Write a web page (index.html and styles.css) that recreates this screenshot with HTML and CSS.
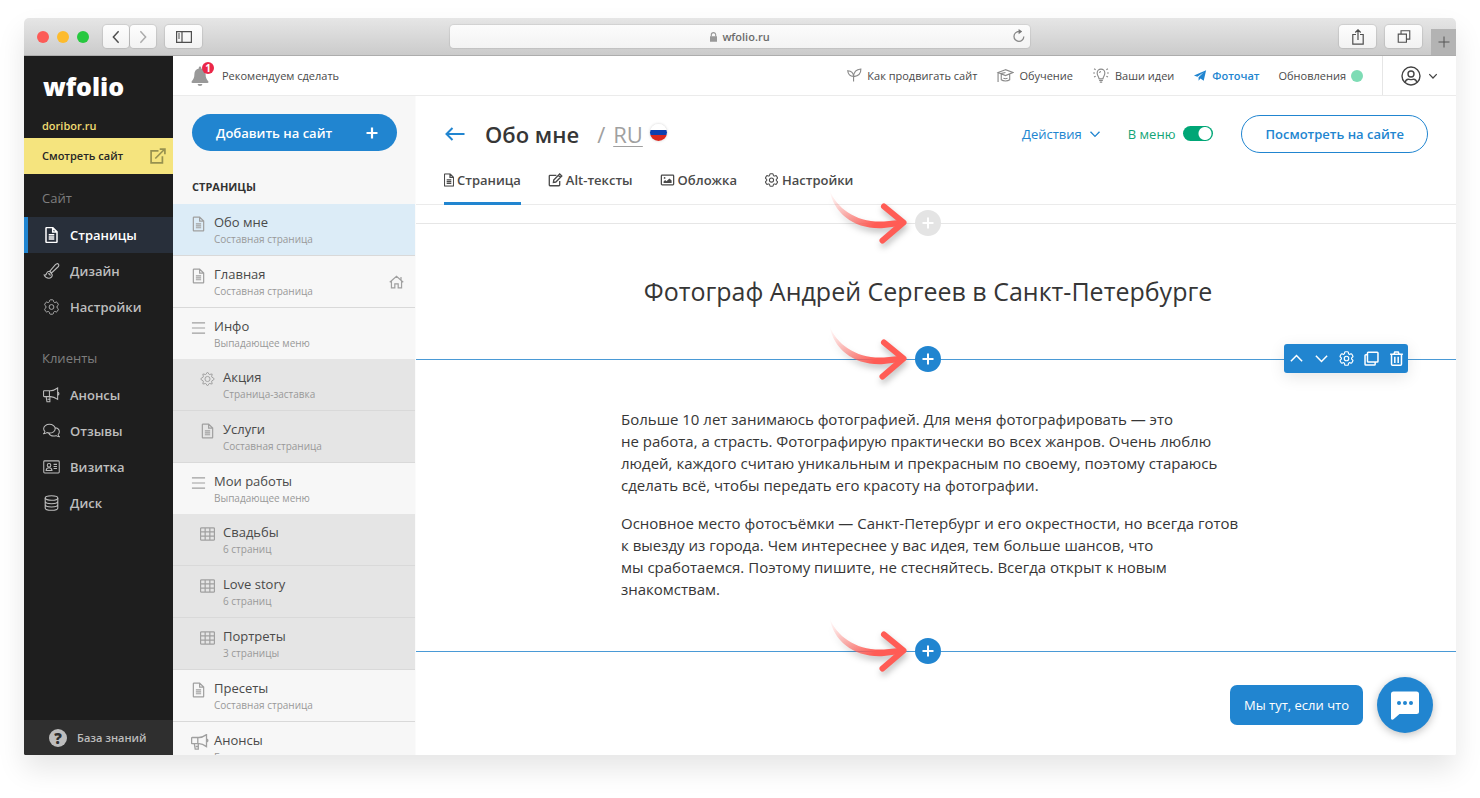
FILE: index.html
```html
<!DOCTYPE html>
<html lang="ru">
<head>
<meta charset="utf-8">
<title>wfolio.ru</title>
<link rel="stylesheet" href="styles.css">
</head>
<body>
<svg class="sprite" aria-hidden="true">
  <symbol id="doc" viewBox="0 0 16 16"><path d="M2.5 1.2A.7.7 0 0 1 3.2.6h6l4.3 4.3v9.8a.7.7 0 0 1-.7.7H3.2a.7.7 0 0 1-.7-.7zM9.2.8v4.1h4.1M5.2 7.8h5.6M5.2 9.9h5.6M5.2 12h5.6"/></symbol>
  <symbol id="gear" viewBox="2 2 20 20"><path d="M9.594 3.94c.09-.542.56-.94 1.11-.94h2.593c.55 0 1.02.398 1.11.94l.213 1.281c.063.374.313.686.645.87.074.04.147.083.22.127.325.196.72.257 1.075.124l1.217-.456a1.125 1.125 0 0 1 1.37.49l1.296 2.247a1.125 1.125 0 0 1-.26 1.431l-1.003.827c-.293.241-.438.613-.43.992a7.723 7.723 0 0 1 0 .255c-.008.378.137.75.43.991l1.004.827c.424.35.534.955.26 1.43l-1.298 2.247a1.125 1.125 0 0 1-1.369.491l-1.217-.456c-.355-.133-.75-.072-1.076.124a6.47 6.47 0 0 1-.22.128c-.331.183-.581.495-.644.869l-.213 1.281c-.09.543-.56.94-1.11.94h-2.594c-.55 0-1.019-.398-1.11-.94l-.213-1.281c-.062-.374-.312-.686-.644-.87a6.52 6.52 0 0 1-.22-.127c-.325-.196-.72-.257-1.076-.124l-1.217.456a1.125 1.125 0 0 1-1.369-.49l-1.297-2.247a1.125 1.125 0 0 1 .26-1.431l1.004-.827c.292-.24.437-.613.43-.991a6.932 6.932 0 0 1 0-.255c.007-.38-.138-.751-.43-.992l-1.004-.827a1.125 1.125 0 0 1-.26-1.43l1.297-2.247a1.125 1.125 0 0 1 1.37-.491l1.216.456c.356.133.751.072 1.076-.124.072-.044.146-.086.22-.128.332-.183.582-.495.644-.869zM15 12a3 3 0 1 1-6 0 3 3 0 0 1 6 0z"/></symbol>
  <symbol id="cog8" viewBox="2 2 20 20"><path d="M12 2.8l2.300 3.200 3.900-.7-.7 3.900 3.300 2.300v1l-3.300 2.300.7 3.900-3.900-.7-2.300 3.200-2.300-3.200-3.900.7.7-3.900-3.300-2.300v-1l3.300-2.300-.7-3.900 3.900.7z"/><circle cx="12" cy="12" r="3.400"/></symbol>
  <symbol id="brush" viewBox="0 0 16 16"><path d="M14.900 1.100c-.9-.9-2.200-.3-3 .5L6.300 8.200l1.700 1.700L14.400 4c.8-.8 1.300-2.100.5-2.900zM6.300 8.300c-1.500-.1-2.900.6-3.200 2.100-.2 1.200-1 1.800-2.400 1.700.9 2.200 3 3.200 5 3.100 2.100-.1 3.400-2 2.900-3.800zM4.700 10.600c1.300-.1 1.800.8 2.200 2"/></symbol>
  <symbol id="horn" viewBox="0 0 18 16"><path d="M1.200 3.500H8c2.700 0 5.500-1.500 7.500-2.900v12c-2-1.400-4.800-2.900-7.500-2.900H1.200A.6.600 0 0 1 .6 9.100V4.100a.6.600 0 0 1 .6-.6zM6.800 3.500v6.200M15.500 5.200a1.400 1.400 0 0 1 0 2.800M3.300 9.700l.9 5.500h3.100V9.900M4.800 12.500h2.500"/></symbol>
  <symbol id="chats" viewBox="0 0 18 16"><path d="M6.800.9C3.400.9.700 3 .700 5.600c0 1.100.5 2.100 1.300 2.900-.1.900-.6 1.700-1.300 2.300 1.400 0 2.600-.4 3.500-1.100.8.3 1.700.5 2.600.5 3.400 0 6.100-2.100 6.100-4.600S10.200.9 6.800.9zM13.200 4.600c2.400.5 4.100 2.200 4.100 4.200 0 1.100-.5 2.100-1.300 2.900.1.900.6 1.700 1.300 2.300-1.400 0-2.600-.4-3.500-1.100-3 .9-6.300 0-7.700-2.600"/></symbol>
  <symbol id="card" viewBox="0 0 18 16"><rect x=".8" y="1.500" width="16.400" height="12.800" rx="1"/><circle cx="6.400" cy="6.200" r="1.900"/><path d="M3.300 11.600c.2-2 1.300-2.900 3.100-2.900s2.900.9 3.100 2.900zM11.200 5.200h3.600M11.200 7.400h3.600M11.200 9.600h3.600"/></symbol>
  <symbol id="disk" viewBox="0 0 16 16"><ellipse cx="8" cy="3" rx="6.300" ry="2.300"/><path d="M1.700 3v9.900c0 1.300 2.800 2.400 6.300 2.400s6.300-1.100 6.300-2.400V3M1.700 6.300c0 1.300 2.800 2.400 6.300 2.400s6.300-1.100 6.300-2.400M1.700 9.600c0 1.300 2.800 2.400 6.300 2.400s6.300-1.100 6.300-2.400"/></symbol>
  <symbol id="bars" viewBox="0 0 16 16"><path d="M1 2.500h14M1 8h14M1 13.500h14"/></symbol>
  <symbol id="table" viewBox="0 0 16 16"><rect x=".6" y="1.500" width="14.800" height="13" rx="1"/><path d="M.6 5.800h14.800M.6 10.200h14.800M5.500 1.500v13M10.500 1.500v13"/></symbol>
  <symbol id="home" viewBox="0 0 16 16"><path d="M.8 8.300 8 1.900l7.200 6.400M2.600 6.900v7.400h3.600V9.900h3.600v4.400h3.600V6.900M12.800 5.800V2.700"/></symbol>
  <symbol id="down" viewBox="0 0 16 16"><path d="M2 5l6 6.200L14 5"/></symbol>
  <symbol id="up" viewBox="0 0 16 16"><path d="M2 11l6-6.200 6 6.200"/></symbol>
  <symbol id="plus" viewBox="0 0 12 12"><path d="M6 .5v11M.5 6h11"/></symbol>
  <symbol id="external" viewBox="0 0 16 16"><path d="M8.500 2.900H1.100v12h11.300V8.200M5.300 10.500l9-9M9.700 1.100h5.200v5.200"/></symbol>
  <symbol id="bell" viewBox="0 0 18 20"><path d="M9 .5a1.200 1.200 0 0 0-1.200 1.300v.6C4.900 3 3.400 5.300 3.400 8c0 3.800-1 5.300-2.600 7.300-.6.800-.2 1.700.7 1.700h15c.9 0 1.300-.9.700-1.700-1.600-2-2.600-3.500-2.600-7.300 0-2.700-1.500-5-4.400-5.600v-.6A1.200 1.200 0 0 0 9 .5zM6.600 18h4.800a2.400 2 0 0 1-4.800 0z"/></symbol>
  <symbol id="sprout" viewBox="0 0 16 16"><path d="M7 14.500V9C3.300 8.700 1.100 6.300.8 2.900 4.600 3.100 6.900 5 7 9M7 9.200C7.200 4.500 10 1.500 14.800 1.100c.1 4-2.300 7.400-7.500 8.100"/></symbol>
  <symbol id="grad" viewBox="0 0 18 16"><path d="M9.500 1.800 1.600 4.800l7.900 3.300 7.900-3.300zM5 6.500v6c2.300 1.800 6.700 1.800 9 0v-6M1.600 5v10M9.500 4.800 4.500 6M7.300 11c1.400.6 3 .6 4.400 0"/></symbol>
  <symbol id="idea" viewBox="0 0 18 16"><path d="M6.900 11.500C6.900 9.300 4.900 8.500 4.900 5.300a4.100 4.100 0 0 1 8.200 0c0 3.200-2 4-2 6.200zM7 13.200h4M7.700 15h2.600M7.500 5.300A1.600 1.600 0 0 1 9 3.800M.6 5.300h2M15.400 5.300h2M1.600.9l1.700 1M16.400.9l-1.700 1M1.600 9.700l1.700-1M16.400 9.700l-1.700-1"/></symbol>
  <symbol id="plane" viewBox="0 0 16 14"><path d="M15.800.3.300 7.100l4.300 1.500L12.800 3 6.200 9.200v4.500l2.400-2.900 4.100 3z"/></symbol>
  <symbol id="user" viewBox="0 0 20 20"><circle cx="10" cy="10" r="9"/><circle cx="10" cy="8" r="3"/><path d="M4 16.600c.7-2.600 2.500-3.600 4.200-3.200 1.200.3 2.400.3 3.600 0 1.700-.4 3.500.6 4.200 3.200"/></symbol>
  <symbol id="edit" viewBox="0 0 16 16"><path d="M9 2.700H1.700a.8.800 0 0 0-.8.800v10.300a.8.800 0 0 0 .8.800H12a.8.800 0 0 0 .8-.8V9M6 7.900l6.800-6.800 2.400 2.400-6.800 6.800-2.800.4zM11.200 2.700l2.400 2.400"/></symbol>
  <symbol id="picture" viewBox="0 0 16 16"><rect x="1" y="2.500" width="14" height="11" rx=".8"/><path class="solid" d="M3.500 11.500V9.800l1.800-1.700L6.800 9.500l3.400-3.300 2.500 2.500v2.800z"/><circle class="solid" cx="4.700" cy="5.600" r="1"/></symbol>
  <symbol id="copy" viewBox="0 0 16 16"><path d="M4.500 1.200h9.600a.8.800 0 0 1 .8.800v8.900a.8.800 0 0 1-.8.800H4.500a.8.800 0 0 1-.8-.8V2a.8.800 0 0 1 .8-.8zM3.500 4H1.900a.8.800 0 0 0-.8.800v9.200a.8.800 0 0 0 .8.800h9.200a.8.800 0 0 0 .8-.8v-2"/></symbol>
  <symbol id="trash" viewBox="0 0 16 16"><path d="M1.200 3.500h13.600M5.200 3.300 6.200 1.100h3.600l1 2.200M2.700 3.700v10.500a1 1 0 0 0 1 1h8.600a1 1 0 0 0 1-1V3.700M6.200 6.200v6.500M9.800 6.200v6.500"/></symbol>
  <symbol id="back" viewBox="0 0 20 14"><path d="M19.500 7H1.500M7.500 1l-6 6 6 6"/></symbol>
  <symbol id="pointer" viewBox="0 0 96 66">
    <linearGradient id="fade" gradientUnits="userSpaceOnUse" x1="10" y1="6" x2="56" y2="38"><stop offset="0" stop-color="#ff5c55" stop-opacity="0"/><stop offset="1" stop-color="#ff5c55"/></linearGradient>
    <path fill="url(#fade)" d="M9.500 5C17 24 37 38 64 36.500l20-2v6l-20 2.500C35 45 14 29 9.500 5z"/>
    <path fill="none" stroke="#ff5c55" stroke-width="6" stroke-linecap="round" stroke-linejoin="round" d="M64 21.500 83.500 37.500 62.500 55.500"/>
  </symbol>
</svg>

<div class="window">
  <header class="chrome">
    <div class="left">
      <div class="lights"><i class="red"></i><i class="yellow"></i><i class="green"></i></div>
      <div class="navpair">
        <button class="cbtn" aria-label="Назад"><svg viewBox="0 0 10 16"><path d="M8 1.500 2 8l6 6.500"/></svg></button>
        <button class="cbtn dim" aria-label="Вперёд"><svg viewBox="0 0 10 16"><path d="M2 1.500 8 8l-6 6.500"/></svg></button>
      </div>
      <button class="cbtn wide" aria-label="Боковая панель"><svg viewBox="0 0 16 12"><path d="M.6.600h14.800v10.800H.600zM6 .6v10.800M2 3h2M2 5h2M2 7h2"/></svg></button>
    </div>
    <div class="address">
      <svg class="lock" viewBox="0 0 8 11"><path d="M0 4.600h8V11H0z"/><path class="shackle" d="M1.500 5V3a2.500 2.500 0 0 1 5 0v2"/></svg>
      <span>wfolio.ru</span>
      <button class="reload" aria-label="Обновить"><svg viewBox="0 0 12 14"><path d="M10.800 7.500a4.900 4.900 0 1 1-4.800-5"/><path class="tip" d="M5.600 0l3.600 2.600-3.600 2.600z"/></svg></button>
    </div>
    <div class="right">
      <button class="cbtn wide" aria-label="Поделиться"><svg class="share" viewBox="0 0 12 16"><path d="M4 5.500H.800v9.700h10.400V5.500H8M6 11V1M3.300 3.500 6 .800l2.700 2.700"/></svg></button>
      <button class="cbtn wide tabs-btn" aria-label="Вкладки"><svg viewBox="0 0 14 14"><path d="M.8 4.400h8.800v8.800H.800zM3.800 4V.800h9.400v9h-3.200"/></svg></button>
      <button class="newtab" aria-label="Новая вкладка"><svg viewBox="0 0 12 12"><use href="#plus"/></svg></button>
    </div>
  </header>

  <div class="app">
    <nav class="side">
      <a class="logo" href="#">wfolio</a>
      <a class="domain" href="#">doribor.ru</a>
      <a class="visit" href="#">Смотреть сайт<svg><use href="#external"/></svg></a>
      <h3>Сайт</h3>
      <a class="item active" href="#"><svg><use href="#doc"/></svg>Страницы</a>
      <a class="item" href="#"><svg><use href="#brush"/></svg>Дизайн</a>
      <a class="item" href="#"><svg><use href="#gear"/></svg>Настройки</a>
      <h3 class="second">Клиенты</h3>
      <a class="item" href="#"><svg><use href="#horn"/></svg>Анонсы</a>
      <a class="item" href="#"><svg><use href="#chats"/></svg>Отзывы</a>
      <a class="item" href="#"><svg><use href="#card"/></svg>Визитка</a>
      <a class="item" href="#"><svg><use href="#disk"/></svg>Диск</a>
      <a class="help" href="#"><span class="q">?</span>База знаний</a>
    </nav>

    <div class="work">
      <div class="topbar">
        <a class="notice" href="#"><span class="bell"><svg><use href="#bell"/></svg><b>1</b></span>Рекомендуем сделать</a>
        <a href="#"><svg><use href="#sprout"/></svg>Как продвигать сайт</a>
        <a href="#"><svg class="w18"><use href="#grad"/></svg>Обучение</a>
        <a href="#"><svg class="w18"><use href="#idea"/></svg>Ваши идеи</a>
        <a class="chat" href="#"><svg><use href="#plane"/></svg>Фоточат</a>
        <a href="#">Обновления<i class="dot"></i></a>
        <button class="account" aria-label="Аккаунт"><svg class="avatar"><use href="#user"/></svg><svg class="chev"><use href="#down"/></svg></button>
      </div>

      <div class="columns">
        <aside class="list">
          <button class="add">Добавить на сайт<svg><use href="#plus"/></svg></button>
          <h2>Страницы</h2>
          <ul>
            <li class="current"><a href="#"><svg><use href="#doc"/></svg><span>Обо мне<small>Составная страница</small></span></a></li>
            <li><a href="#"><svg><use href="#doc"/></svg><span>Главная<small>Составная страница</small></span><svg class="home"><use href="#home"/></svg></a></li>
            <li class="group"><a href="#"><svg><use href="#bars"/></svg><span>Инфо<small>Выпадающее меню</small></span></a></li>
            <li class="sub"><a href="#"><svg><use href="#cog8"/></svg><span>Акция<small>Страница-заставка</small></span></a></li>
            <li class="sub"><a href="#"><svg><use href="#doc"/></svg><span>Услуги<small>Составная страница</small></span></a></li>
            <li class="group"><a href="#"><svg><use href="#bars"/></svg><span>Мои работы<small>Выпадающее меню</small></span></a></li>
            <li class="sub"><a href="#"><svg><use href="#table"/></svg><span>Свадьбы<small>6 страниц</small></span></a></li>
            <li class="sub"><a href="#"><svg><use href="#table"/></svg><span>Love story<small>6 страниц</small></span></a></li>
            <li class="sub"><a href="#"><svg><use href="#table"/></svg><span>Портреты<small>3 страницы</small></span></a></li>
            <li><a href="#"><svg><use href="#doc"/></svg><span>Пресеты<small>Составная страница</small></span></a></li>
            <li class="news"><a href="#"><svg><use href="#horn"/></svg><span>Анонсы<small>Блог</small></span></a></li>
          </ul>
        </aside>

        <main class="main">
          <div class="head">
            <div class="titlerow">
              <a class="back" href="#" aria-label="Назад"><svg><use href="#back"/></svg></a>
              <h1>Обо мне</h1>
              <span class="lang">/<a href="#">RU</a></span>
              <i class="flag"></i>
              <button class="actions">Действия<svg><use href="#down"/></svg></button>
              <label class="toggle">В меню<input type="checkbox" checked></label>
              <a class="view" href="#">Посмотреть на сайте</a>
            </div>
            <div class="tabs">
              <a class="on" href="#"><svg class="page" viewBox="2 0 12 16"><use href="#doc" width="16" height="16"/></svg>Страница</a>
              <a href="#"><svg><use href="#edit"/></svg>Alt-тексты</a>
              <a href="#"><svg><use href="#picture"/></svg>Обложка</a>
              <a href="#"><svg><use href="#gear"/></svg>Настройки</a>
            </div>
          </div>

          <div class="divider muted"><svg class="pointer"><use href="#pointer"/></svg><button aria-label="Добавить блок"><svg><use href="#plus"/></svg></button></div>
          <h2 class="headline">Фотограф Андрей Сергеев в Санкт-Петербурге</h2>
          <div class="divider">
            <svg class="pointer"><use href="#pointer"/></svg>
            <button aria-label="Добавить блок"><svg><use href="#plus"/></svg></button>
            <div class="tools">
              <button aria-label="Выше"><svg><use href="#up"/></svg></button>
              <button aria-label="Ниже"><svg><use href="#down"/></svg></button>
              <button aria-label="Настройки"><svg><use href="#gear"/></svg></button>
              <button aria-label="Копировать"><svg><use href="#copy"/></svg></button>
              <button aria-label="Удалить"><svg><use href="#trash"/></svg></button>
            </div>
          </div>
          <article class="text">
            <p>Больше 10 лет занимаюсь фотографией. Для меня фотографировать&nbsp;— это<br>не&nbsp;работа, а&nbsp;страсть. Фотографирую практически во&nbsp;всех жанров. Очень люблю людей, каждого считаю уникальным и&nbsp;прекрасным по&nbsp;своему, поэтому стараюсь сделать всё, чтобы передать его красоту на&nbsp;фотографии.</p>
            <p>Основное место фотосъёмки&nbsp;— Санкт-Петербург и&nbsp;его окрестности, но&nbsp;всегда готов к&nbsp;выезду из&nbsp;города. Чем интереснее у&nbsp;вас идея, тем больше шансов, что<br>мы&nbsp;сработаемся. Поэтому пишите, не&nbsp;стесняйтесь. Всегда открыт к&nbsp;новым<br>знакомствам.</p>
          </article>
          <div class="divider"><svg class="pointer"><use href="#pointer"/></svg><button aria-label="Добавить блок"><svg><use href="#plus"/></svg></button></div>

          <div class="support">
            <span class="bubble">Мы тут, если что</span>
            <button aria-label="Открыть чат"><svg viewBox="0 0 28 29"><path fill="#fff" d="M2.500.500h23A2.500 2.500 0 0 1 28 3v17.500a2.500 2.500 0 0 1-2.500 2.500H8.500l-6 5.300C1.500 29.100 0 28.700 0 27.200V3A2.500 2.500 0 0 1 2.500.500z"/><g fill="#2185d0"><circle cx="8" cy="12" r="2"/><circle cx="14" cy="12" r="2"/><circle cx="20" cy="12" r="2"/></g></svg></button>
          </div>
        </main>
      </div>
    </div>
  </div>
</div>
</body>
</html>
```
FILE: styles.css
```css
* { box-sizing: border-box; }
body {
  margin: 0;
  padding: 18px 24px 43px;
  height: 100vh;
  overflow: hidden;
  background: #fff;
  color: #4a4a4a;
  font: 13px/20px "Open Sans", "Noto Sans", sans-serif;
}
a { color: inherit; text-decoration: none; }
button { border: 0; padding: 0; background: none; color: inherit; font: inherit; cursor: pointer; }
h1, h2, h3, p, ul { margin: 0; padding: 0; }
ul { list-style: none; }
svg { width: 16px; height: 16px; fill: none; stroke: currentColor; stroke-width: 1.3; flex: none; display: block; }
.sprite { position: absolute; width: 0; height: 0; }
.solid { fill: currentColor; stroke: none; }

.window {
  display: flex;
  flex-direction: column;
  height: 100%;
  border-radius: 5px 5px 2px 2px;
  overflow: hidden;
  box-shadow: 0 14px 28px rgba(0, 0, 0, .1);
}

/* browser chrome */
.chrome {
  display: flex;
  align-items: center;
  height: 38px;
  flex: none;
  background: linear-gradient(#e6e6e6, #cbcbcb);
  border-bottom: 1px solid #adadad;
}
.left, .right { display: flex; flex: 1; align-items: center; align-self: stretch; }
.right { justify-content: flex-end; }
.lights { display: flex; gap: 8px; margin: 0 14px 0 13px; }
.lights i { width: 12px; height: 12px; border-radius: 50%; }
.red { background: #fc5b57; }
.yellow { background: #fdbb2d; }
.green { background: #27c83f; }
.cbtn {
  width: 26px;
  height: 23px;
  display: flex;
  align-items: center;
  justify-content: center;
  background: linear-gradient(#fdfdfd, #f2f2f2);
  border-radius: 4px;
  box-shadow: 0 0 1px 1px rgba(0, 0, 0, .09);
  color: #4e4e4e;
}
.cbtn svg { height: 12px; width: 16px; stroke-width: 1.2; }
.navpair { display: flex; gap: 1px; margin-right: 9px; }
.navpair svg { height: 14px; width: 10px; stroke-width: 1.7; }
.dim { color: #ababab; }
.cbtn.wide { width: 37px; }
.cbtn .share { height: 16px; }
.tabs-btn { margin: 0 9px; }
.tabs-btn svg { height: 13px; }
.address {
  display: flex;
  align-items: center;
  justify-content: center;
  gap: 5px;
  position: relative;
  width: 40.5%;
  height: 23px;
  border-radius: 4px;
  background: linear-gradient(#fcfcfc, #f3f3f3);
  box-shadow: 0 0 1px 1px rgba(0, 0, 0, .07);
  font-size: 11px;
  font-weight: 600;
  color: #6b6b6b;
}
.address .lock { width: 7px; height: 10px; fill: #999; stroke: none; }
.address .shackle { fill: none; stroke: #999; }
.reload { position: absolute; right: 5px; top: 4px; color: #8a8a8a; }
.reload svg { width: 12px; height: 14px; }
.reload .tip { fill: #777; stroke: none; }
.newtab { align-self: flex-end; width: 25px; height: 26px; background: #b3b3b3; display: flex; align-items: center; justify-content: center; color: #555; }
.newtab svg { width: 12px; height: 12px; stroke-width: 1; }

.app { display: flex; flex: 1; min-height: 0; }

/* dark sidebar */
.side {
  display: flex;
  flex-direction: column;
  width: 149px;
  flex: none;
  background: #1e1e1e;
  color: #bdbdbd;
}
.logo { padding: 14px 19px 0; height: 60px; font: 900 25px/32px "Noto Sans", "Open Sans", sans-serif; color: #fff; }
.domain { padding: 0 18px; height: 22px; font-size: 11px; font-weight: 600; color: #f0dc72; line-height: 20px; }
.visit {
  display: flex;
  align-items: center;
  justify-content: space-between;
  height: 36px;
  padding: 0 7px 0 18px;
  background: #f5e47e;
  color: #262626;
  font-size: 11px;
  font-weight: 600;
}
.visit svg { color: #97914f; stroke-width: 1.7; }
.side h3 { padding: 14px 18px 9px; font-size: 13px; font-weight: 400; color: #7e7e7e; }
.side .second { margin-top: 9px; }
.item { display: flex; align-items: center; gap: 10px; height: 36px; padding-left: 19px; font-weight: 600; }
.item svg { width: 17px; stroke-width: 1.1; }
.active { background: #282f3a; border-left: 4px solid #2185d0; padding-left: 15px; color: #fff; }
.active svg { stroke-width: 1.5; }
.help { display: flex; align-items: center; gap: 10px; height: 35px; margin-top: auto; padding-left: 25px; background: #2f2f2f; font-size: 11px; font-weight: 600; }
.q { width: 18px; height: 18px; border-radius: 50%; background: #bdbdbd; color: #2f2f2f; font-size: 15px; font-weight: 800; line-height: 18px; text-align: center; }

/* top bar */
.work { display: flex; flex-direction: column; flex: 1; min-width: 0; background: #fff; }
.topbar { display: flex; align-items: center; height: 40px; flex: none; border-bottom: 1px solid #ebebeb; font-size: 11px; gap: 19px; }
.topbar a { display: flex; align-items: center; gap: 5px; }
.topbar a svg { width: 15px; height: 15px; color: #8a8a8a; stroke-width: 1.2; }
.topbar a .w18 { width: 18px; }
.topbar .notice { margin: 0 auto 0 18px; gap: 13px; }
.bell { position: relative; display: block; }
.topbar .bell svg { width: 18px; height: 20px; fill: #999; stroke: none; }
.bell b { position: absolute; left: 11px; top: -4px; width: 12px; height: 12px; border-radius: 50%; background: #eb2748; color: #fff; font-size: 10px; line-height: 12px; text-align: center; }
.topbar .chat { color: #2185d0; font-weight: 600; }
.topbar .chat svg { color: #2185d0; fill: currentColor; stroke: none; width: 14px; height: 11px; }
.dot { width: 12px; height: 12px; border-radius: 50%; background: #7edcb5; }
.account { display: flex; align-items: center; gap: 7px; align-self: stretch; border-left: 1px solid #e6e6e6; padding: 0 18px; color: #444; }
.account .avatar { width: 20px; height: 20px; stroke-width: 1.4; }
.account .chev { width: 10px; height: 10px; stroke-width: 2; }

.columns { display: flex; flex: 1; min-height: 0; }

/* page list */
.list { width: 243px; flex: none; background: #f7f7f7; padding-top: 18px; overflow: hidden; border-right: 1px solid #fbfbfb; }
.add {
  display: flex;
  align-items: center;
  justify-content: space-between;
  width: 205px;
  height: 37px;
  margin-left: 19px;
  padding: 0 19px 0 24px;
  border-radius: 19px;
  background: #2185d0;
  color: #fff;
  font-weight: 600;
}
.add svg { width: 12px; height: 12px; stroke-width: 2.2; }
.list h2 { margin: 26px 0 7px 19px; font-size: 11px; font-weight: 700; color: #333; text-transform: uppercase; }
.list li { border-bottom: 1px solid #d9d9d9; }
.list li a { display: flex; height: 51px; padding: 8px 11px 0 18px; gap: 8px; }
.list li svg { width: 15px; height: 16px; margin-top: 4px; color: #a0a0a0; stroke-width: 1.3; }
.list li span { flex: 1; }
.list small { display: block; font-size: 10px; line-height: 14px; color: #999; }
.list .current { background: #dcecf7; }
.list .group { border-bottom: 0; }
.list .sub { background: #e5e5e5; }
.list .sub a { padding-left: 27px; }
.list li .home { margin-top: 10px; }
.list .news a { gap: 5px; }
.list .news svg { width: 18px; }

/* editor */
.main { position: relative; flex: 1; min-width: 0; }
.head { border-bottom: 1px solid #ebebeb; }
.titlerow { display: flex; align-items: center; height: 75px; padding: 0 28px 0 29px; color: #2185d0; }
.back svg { width: 20px; height: 14px; stroke-width: 2; }
.titlerow h1 { margin-left: 20px; font-size: 22px; font-weight: 600; line-height: 32px; color: #363636; }
.lang { margin-left: 18px; font-size: 22px; color: #a0a0a0; }
.lang a { margin-left: 8px; text-decoration: underline; text-decoration-thickness: 1px; text-underline-offset: 3px; }
.flag { width: 17px; height: 17px; margin: 0 auto 3px 7px; border-radius: 50%; background: linear-gradient(#fff 33%, #0c3fb0 33% 67%, #d9271e 67%); box-shadow: 0 0 3px rgba(0, 0, 0, .2); }
.actions { display: flex; align-items: center; gap: 7px; }
.actions svg { width: 12px; height: 12px; stroke-width: 1.8; }
.toggle { display: flex; align-items: center; gap: 8px; margin: 0 28px 0 27px; color: #12a577; }
.toggle input { appearance: none; width: 30px; height: 15px; margin: 0; border-radius: 8px; background: radial-gradient(circle at 22px 50%, #fff 6px, #00a676 7px); }
.view { height: 38px; padding: 0 23px; border: 1px solid #2185d0; border-radius: 19px; font-weight: 600; line-height: 36px; }
.tabs { display: flex; gap: 27px; margin-bottom: -1px; padding-left: 28px; font-weight: 600; }
.tabs a { display: flex; align-items: center; gap: 3px; height: 34px; padding-bottom: 14px; border-bottom: 3px solid transparent; }
.tabs svg { width: 15px; height: 14px; stroke-width: 1.5; }
.tabs .page { width: 10px; }
.tabs .on { border-bottom-color: #2185d0; }

.divider { position: relative; display: flex; align-items: center; justify-content: center; height: 26px; padding-right: 16px; background: linear-gradient(#4a9ad6, #4a9ad6) center / 100% 1px no-repeat; }
.divider > button { display: flex; align-items: center; justify-content: center; width: 26px; height: 26px; border-radius: 50%; background: #2185d0; color: #fff; }
.divider > button svg { width: 12px; height: 12px; stroke-width: 2; }
.muted { margin-top: 5px; background-image: linear-gradient(#e6e6e6, #e6e6e6); }
.divider.muted > button { background: #e4e4e4; }
.divider .pointer { position: absolute; right: 50%; top: -25px; width: 96px; height: 66px; margin-right: 20px; stroke: none; overflow: visible; filter: drop-shadow(1px 4px 3px rgba(0, 0, 0, .25)); }
.tools { position: absolute; right: 48px; top: -2px; display: flex; gap: 10px; padding: 7px 4px 7px 5px; border-radius: 3px; background: #2185d0; color: #fff; box-shadow: 0 4px 16px rgba(0, 0, 0, .1); }
.tools svg { width: 15px; height: 15px; stroke-width: 1.6; }
.headline { padding: 35px 16px 35px 0; font-size: 25px; font-weight: 400; line-height: 40px; text-align: center; color: #363636; }
.text { max-width: 646px; margin: 0 auto; padding: 36px 15px 38px 8px; font-size: 15px; line-height: 22px; color: #363636; }
.text p + p { margin-top: 16px; }

.support { position: absolute; right: 23px; bottom: 22px; display: flex; align-items: center; gap: 14px; }
.bubble { padding: 10px 14px; border-radius: 7px; background: #2185d0; color: #fff; }
.support button { width: 56px; height: 56px; border-radius: 50%; background: #2185d0; display: flex; align-items: center; justify-content: center; box-shadow: 0 2px 8px rgba(0, 0, 0, .25); }
.support svg { width: 28px; height: 29px; stroke: none; }
```
